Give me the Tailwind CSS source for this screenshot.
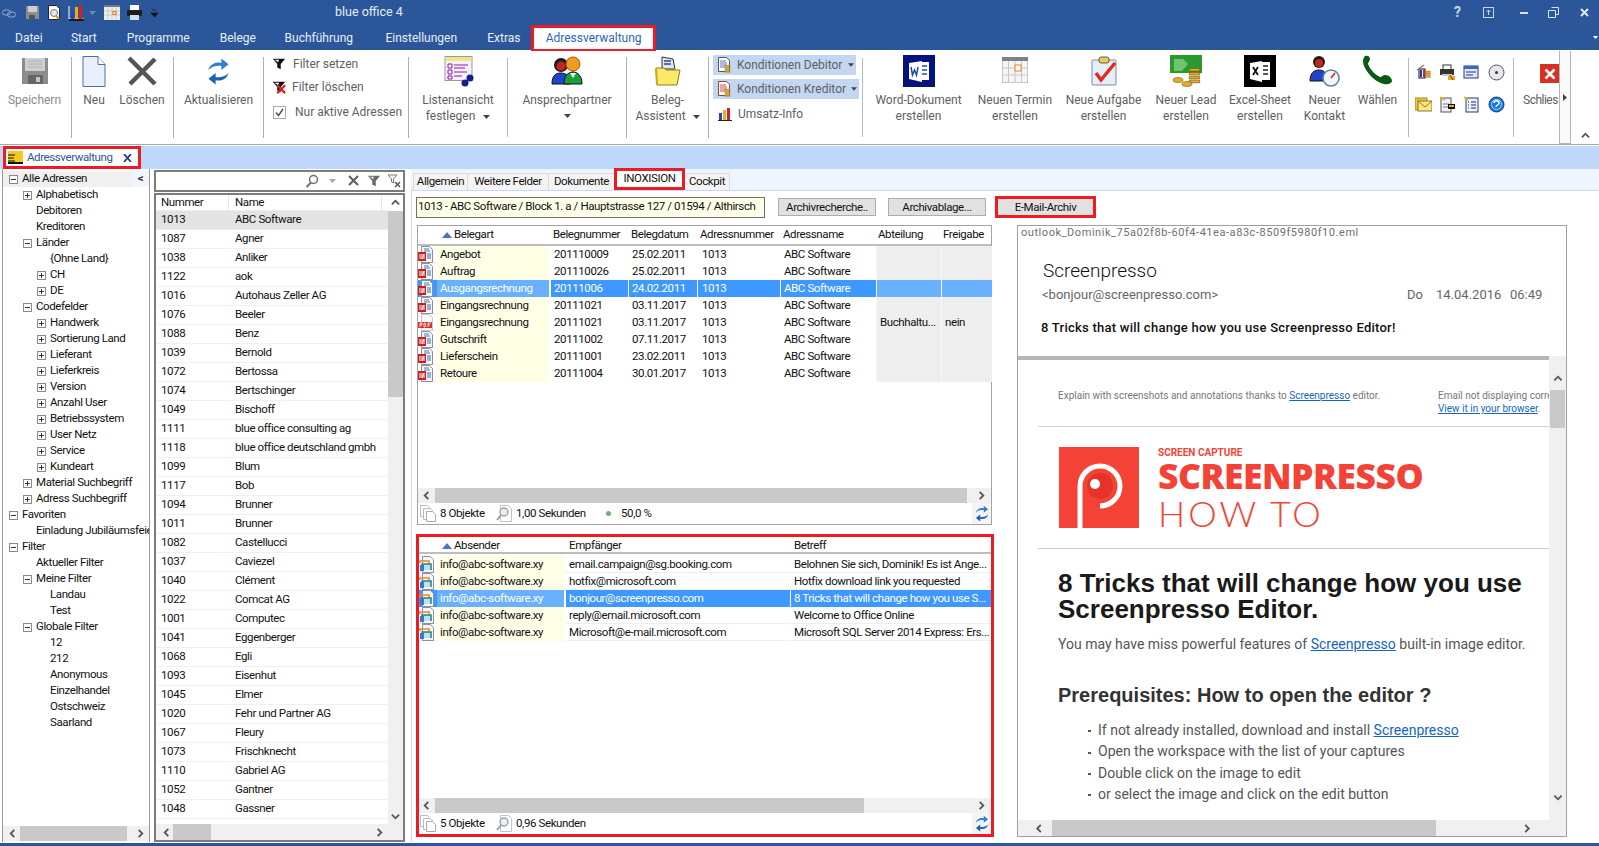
<!DOCTYPE html>
<html lang="de">
<head>
  <meta charset="UTF-8">
  <title>blue office 4</title>
  <script src="https://cdn.jsdelivr.net/npm/@tailwindcss/browser@4"></script>
</head>
<body class="h-[846px] w-[1599px] overflow-hidden bg-white font-['Roboto',sans-serif] text-[11.5px] tracking-[-0.4px] text-[#111]">
  <!-- shared icons -->
  <svg class="hidden">
    <symbol id="inox" viewBox="0 0 16 17"><path d="M3.5.5h8l3 3v13h-11z" fill="#f4f6fa" stroke="#8a8f98"/><path d="M6 3h5M6 5h6" stroke="#5577aa"/><rect x="0" y="6" width="8" height="9" fill="#c9201d"/><path d="M2 8v5M4 8v5l2-5v5" stroke="#fff" fill="none"/><path d="M9 8h4M9 10h4M9 12h4" stroke="#3d6fb4"/></symbol>
    <symbol id="pdf" viewBox="0 0 16 17"><path d="M3.5.5h8l3 3v13h-11z" fill="#f7f7f7" stroke="#c9c9c9"/><rect x="0" y="8" width="14" height="6" fill="#d5322e"/><path d="M2 13v-4h2v2H2M6 9v4h1l1-2-1-2zM10 13V9h3M10 11h2" stroke="#fff" stroke-width=".8" fill="none"/></symbol>
    <symbol id="mail" viewBox="0 0 16 17"><path d="M3.5.5h8l3 3v13h-11z" fill="#f4f6fa" stroke="#8a8f98"/><path d="M1 7V5h9v2" fill="none" stroke="#e88a25" stroke-width="1.6"/><path d="M3 14V8h9v6" fill="#bfe3ea" stroke="#23808f" stroke-width="1.5"/><path d="M1 9h4v6H1z" fill="#3c78c8"/></symbol>
    <symbol id="funnel" viewBox="0 0 16 16"><path d="M1 2h14L10 8v6l-4-2V8z" fill="#111"/><path d="M3 3h5L7 6z" fill="#fff"/></symbol>
    <symbol id="pages" viewBox="0 0 16 17"><path d="M.5.5h7l2 2v9H.5z" fill="#fff" stroke="#bbb"/><path d="M3.5 3.5h7l2 2v9h-9z" fill="#fff" stroke="#bbb"/><path d="M6.5 6.5h6l3 3v7h-9z" fill="#fff" stroke="#aaa"/></symbol>
    <symbol id="finder" viewBox="0 0 16 17"><path d="M4.5.5h8l3 3v13h-11z" fill="#fff" stroke="#c4c4c4"/><circle cx="8" cy="7" r="4" fill="#e6eef4" stroke="#93a5ae" stroke-width="1.4"/><path d="M5 10l-4 5" stroke="#a0a0a0" stroke-width="2"/></symbol>
    <symbol id="refresh" viewBox="0 0 16 18"><path d="M1 8c1-4 5-6 9-5V0l5 4-5 4V5C7 5 4 5 1 8z" fill="#2e7dd6"/><path d="M15 10c-1 4-5 6-9 5v3l-5-4 5-4v3c3 0 6 0 9-3z" fill="#1e62b8"/></symbol>
    <symbol id="chevL" viewBox="0 0 10 10"><path d="M7 1L3 5l4 4" fill="none" stroke="#555" stroke-width="2"/></symbol>
    <symbol id="chevR" viewBox="0 0 10 10"><path d="M3 1l4 4-4 4" fill="none" stroke="#555" stroke-width="2"/></symbol>
    <symbol id="chevU" viewBox="0 0 10 10"><path d="M1 7l4-4 4 4" fill="none" stroke="#555" stroke-width="2"/></symbol>
    <symbol id="chevD" viewBox="0 0 10 10"><path d="M1 3l4 4 4-4" fill="none" stroke="#555" stroke-width="2"/></symbol>
    <symbol id="sort" viewBox="0 0 10 6"><path d="M5 0l5 6H0z" fill="#4a72c8"/></symbol>
    <symbol id="coins" viewBox="0 0 10 14"><path d="M1 2h8v2H1zM1 5h8v2H1zM1 8h8v2H1zM1 11h8v2H1z" fill="#e2a92b" stroke="#7a5a10" stroke-width=".5"/></symbol>
    <symbol id="caret" viewBox="0 0 7 4"><path d="M0 0h7L3.5 4z" fill="#444"/></symbol>
  </svg>

  <!-- Titelleiste -->
  <div class="flex h-[25px] items-center bg-[#2b579a] text-white tracking-normal">
    <div class="flex w-[335px] items-center">
      <svg class="ml-[2px] h-[12px] w-[14px]" viewBox="0 0 14 12"><rect x=".5" y="3" width="8" height="5" rx="2.5" fill="none" stroke="#8fa6c8"/><rect x="5.5" y="5" width="8" height="5" rx="2.5" fill="none" stroke="#8fa6c8"/></svg>
      <svg class="ml-[9px] h-[15px] w-[15px]" viewBox="0 0 15 15"><path d="M1 1h13v13H1z" fill="#8d8d8d"/><path d="M3 1h9v6H3z" fill="#cfcfcf"/><path d="M4 10h6v4H4z" fill="#555"/></svg>
      <svg class="ml-[6px] h-[16px] w-[16px]" viewBox="0 0 16 16"><path d="M2.500 .5h8l3 3v11h-11z" fill="#fff" stroke="#222"/><circle cx="8" cy="8" r="3.500" fill="#dfe9f0" stroke="#777"/><path d="M10 11l3 3" stroke="#e09a20" stroke-width="2"/></svg>
      <svg class="ml-[6px] h-[18px] w-[17px]" viewBox="0 0 17 18"><path d="M1 2v13h15" fill="none" stroke="#fff"/><rect x="3" y="7" width="3" height="8" fill="#2446c4"/><rect x="7" y="3" width="3" height="12" fill="#e2b01c"/><rect x="11" y="1" width="3" height="14" fill="#d2211f"/><rect x="1" y="15" width="15" height="2" fill="#1b1b1b"/></svg>
      <svg class="ml-[4px] h-[4px] w-[7px]" viewBox="0 0 7 4"><path d="M0 0h7L3.500 4z" fill="#6d88b5"/></svg>
      <svg class="ml-[8px] h-[15px] w-[16px]" viewBox="0 0 16 15"><rect width="16" height="15" fill="#eee"/><rect width="16" height="2" fill="#777"/><path d="M4 2v13M8 2v13M12 2v13M0 6h16M0 10h16" stroke="#bbb" stroke-width=".7"/><rect x="9" y="6.500" width="3" height="3" fill="none" stroke="#e8761c"/></svg>
      <svg class="ml-[6px] h-[17px] w-[17px]" viewBox="0 0 17 17"><rect x="4" y="1" width="9" height="6" fill="#fff"/><rect x="1" y="6" width="15" height="6" rx="1" fill="#1e1e1e"/><rect x="4" y="11" width="9" height="5" fill="#cfe2f0"/></svg>
      <svg class="ml-[8px] h-[8px] w-[7px]" viewBox="0 0 7 8"><path d="M1 1h5M0 4h7L3.500 8z" fill="#111" stroke="#111" stroke-width=".6"/></svg>
    </div>
    <div class="w-[1119px] text-[12.500px] text-[#e6ecf5]">blue office 4</div>
    <div class="flex items-center">
      <span class="w-[28px] text-[14px] font-bold text-[#c9d6e8]">?</span>
      <svg class="ml-[1px] h-[11px] w-[11px]" viewBox="0 0 11 11"><rect x=".5" y=".5" width="10" height="10" fill="none" stroke="#c9d6e8"/><path d="M5.500 8V3M3.500 5l2-2 2 2" fill="none" stroke="#c9d6e8"/></svg>
      <span class="ml-[26px] h-[2px] w-[8px] bg-[#dbe4f1]"></span>
      <svg class="ml-[20px] h-[11px] w-[11px]" viewBox="0 0 11 11"><path d="M3.500.5h7v7h-3M.5 3.500h7v7h-7z" fill="none" stroke="#dbe4f1"/></svg>
      <svg class="ml-[21px] h-[9px] w-[9px]" viewBox="0 0 9 9"><path d="M1 1l7 7M8 1L1 8" stroke="#e5ebf4" stroke-width="1.800"/></svg>
    </div>
  </div>

  <!-- Menüband Tabs -->
  <div class="flex h-[25px] items-center bg-[#2b579a] text-[12px] tracking-normal text-[#e9eef6]">
    <span class="ml-[15px] w-[56px]">Datei</span>
    <span class="w-[56px]">Start</span>
    <span class="w-[93px]">Programme</span>
    <span class="w-[65px]">Belege</span>
    <span class="w-[101px]">Buchführung</span>
    <span class="w-[102px]">Einstellungen</span>
    <span class="w-[44px]">Extras</span>
    <span class="flex h-[26px] w-[125px] items-center justify-center border-[3px] border-b-[2px] border-[#ed1c24] bg-white text-[#2b66b8]">Adressverwaltung</span>
    <svg class="ml-[936px] h-[3px] w-[7px]" viewBox="0 0 7 4"><path d="M0 0h7L3.500 4z" fill="#fff"/></svg>
  </div>

  <!-- Menüband -->
  <div class="flex h-[94px] border-t border-white text-[12px] tracking-normal text-[#5f5f5f]">
    <div class="flex w-[69px] flex-col items-center pt-[6px]">
      <svg class="h-[28px] w-[28px]" viewBox="0 0 28 28"><path d="M1 1h26v26H1z" fill="#8c8c8c"/><path d="M4 1h20v13H4z" fill="#cfcfcf"/><path d="M7 4h14M7 7h14M7 10h14" stroke="#b1b1b1"/><path d="M7 18h15v9H7z" fill="#666"/><path d="M15 20h4v5h-4z" fill="#c6c6c6"/></svg>
      <span class="mt-[7px] leading-[16px] text-[#8a8a8a]">Speichern</span>
    </div>
    <span class="my-[6px] ml-[2px] w-px bg-[#aeb0b3]"></span>
    <div class="flex w-[44px] flex-col items-center pt-[5px]">
      <svg class="h-[31px] w-[24px]" viewBox="0 0 24 31"><path d="M1 .5h15l7 8v22H1z" fill="#e9f0fb" stroke="#4f6f9e"/><path d="M16 .5v8h7" fill="#fff" stroke="#4f6f9e"/></svg>
      <span class="mt-[5px] leading-[16px]">Neu</span>
    </div>
    <div class="flex w-[52px] flex-col items-center pt-[5px]">
      <svg class="h-[30px] w-[30px]" viewBox="0 0 30 30"><path d="M2 2l26 26M28 3L3 28" stroke="#555" stroke-width="4.500"/></svg>
      <span class="mt-[6px] leading-[16px]">Löschen</span>
    </div>
    <span class="my-[6px] ml-[5px] w-px bg-[#aeb0b3]"></span>
    <div class="flex w-[89px] flex-col items-center pt-[5px]">
      <svg class="h-[31px] w-[23px]" viewBox="0 0 16 18"><use href="#refresh"/></svg>
      <span class="mt-[5px] leading-[16px]">Aktualisieren</span>
    </div>
    <span class="my-[6px] w-px bg-[#aeb0b3]"></span>
    <div class="w-[144px]">
      <div class="mt-[5px] flex h-[16px] items-center pl-[8px]"><svg class="h-[14px] w-[14px]" viewBox="0 0 16 16"><use href="#funnel"/></svg><span class="ml-[7px]">Filter setzen</span></div>
      <div class="mt-[7px] flex h-[16px] items-center pl-[8px]"><svg class="h-[14px] w-[14px]" viewBox="0 0 16 16"><use href="#funnel"/><path d="M6 6l9 9M15 6l-9 9" stroke="#d8201d" stroke-width="2.500"/></svg><span class="ml-[6px]">Filter löschen</span></div>
      <div class="mt-[9px] flex h-[16px] items-center pl-[9px]"><svg class="h-[13px] w-[13px]" viewBox="0 0 13 13"><rect x=".5" y=".5" width="12" height="12" fill="#fff" stroke="#aaa"/><path d="M3 6.500l2.500 3L10 3" fill="none" stroke="#555" stroke-width="1.500"/></svg><span class="ml-[9px]">Nur aktive Adressen</span></div>
    </div>
    <span class="my-[6px] w-px bg-[#aeb0b3]"></span>
    <div class="flex w-[98px] flex-col items-center pt-[5px]">
      <svg class="h-[31px] w-[31px]" viewBox="0 0 31 31"><rect x="2" y=".5" width="27" height="24" fill="#f4f1fb" stroke="#999"/><rect x="2.500" y="1" width="26" height="4" fill="#f0e58a"/><path d="M5 8h4v4H5zM5 14h4v4H5zM5 20h4v3H5z" fill="none" stroke="#8a1c9c"/><path d="M11 9h14M11 12h11M11 16h13M11 20h8" stroke="#8a1c9c"/><circle cx="22" cy="27" r="3.500" fill="#12208a"/><circle cx="27" cy="22" r="3.500" fill="#12208a"/></svg>
      <span class="mt-[5px] text-center leading-[16px]">Listenansicht<br>festlegen <svg class="ml-[5px] inline h-[4px] w-[7px] align-middle"><use href="#caret"/></svg></span>
    </div>
    <span class="my-[7px] mb-[7px] w-px bg-[#a9bcd8]"></span>
    <div class="flex w-[118px] flex-col items-center pt-[5px]">
      <svg class="h-[31px] w-[32px]" viewBox="0 0 32 31"><circle cx="10" cy="9" r="7" fill="#1b1b1b"/><circle cx="10" cy="10" r="4.500" fill="#c9241c"/><path d="M1 28c0-9 4-11 9-11s9 3 9 11z" fill="#1f46c8" stroke="#111"/><circle cx="22" cy="8" r="7" fill="#f29a1f" stroke="#9d5a08"/><path d="M13 28c0-8 4-12 9-12s9 4 9 12z" fill="#1aa03a" stroke="#111"/><path d="M19 17l3 5 3-5z" fill="#fff"/></svg>
      <span class="mt-[5px] text-center leading-[16px]">Ansprechpartner</span>
      <svg class="mt-[6px] h-[4px] w-[7px]"><use href="#caret"/></svg>
    </div>
    <span class="my-[6px] w-px bg-[#aeb0b3]"></span>
    <div class="flex w-[81px] flex-col items-center pt-[5px]">
      <svg class="h-[31px] w-[28px]" viewBox="0 0 28 31"><path d="M8 1l11 2 2 10-13 0z" fill="#dfe6f2" stroke="#333"/><path d="M10 5h7M10 8h7" stroke="#334a88" stroke-width="1.500"/><path d="M2 12h8l2 2h14l-3 15H3z" fill="#fbe96a" stroke="#8b7b14"/><path d="M2 12l1 17" stroke="#c8a818" stroke-width="2"/></svg>
      <span class="mt-[5px] text-center leading-[16px]">Beleg-<br>Assistent <svg class="ml-[4px] inline h-[4px] w-[7px] align-middle"><use href="#caret"/></svg></span>
    </div>
    <span class="my-[6px] w-px bg-[#aeb0b3]"></span>
    <div class="w-[153px] pl-[4px]">
      <div class="mt-[4px] flex h-[20px] w-[143px] items-center whitespace-nowrap bg-[#c3d6f2] pl-[3px]">
        <svg class="h-[16px] w-[16px] shrink-0" viewBox="0 0 16 16"><path d="M2.500.5h8l3 3v11h-11z" fill="#fff" stroke="#555"/><path d="M4 4h6M4 6h7M4 8h7M4 10h5" stroke="#5a7bb0"/><use href="#coins" x="8" y="7" width="7" height="9"/></svg>
        <span class="ml-[5px]">Konditionen Debitor</span><svg class="ml-[6px] h-[4px] w-[6px] shrink-0"><use href="#caret"/></svg>
      </div>
      <div class="mt-[4px] flex h-[20px] w-[146px] items-center whitespace-nowrap bg-[#c3d6f2] pl-[3px]">
        <svg class="h-[16px] w-[16px] shrink-0" viewBox="0 0 16 16"><path d="M2.500.5h8l3 3v11h-11z" fill="#fff" stroke="#b0382d"/><path d="M4 4h6M4 6h7M4 8h7M4 10h5" stroke="#c9503f"/><use href="#coins" x="8" y="7" width="7" height="9"/></svg>
        <span class="ml-[5px]">Konditionen Kreditor</span><svg class="ml-[5px] h-[4px] w-[6px] shrink-0"><use href="#caret"/></svg>
      </div>
      <div class="mt-[7px] flex h-[16px] items-center pl-[5px]">
        <svg class="h-[14px] w-[14px]" viewBox="0 0 14 14"><rect x="1" y="6" width="3" height="7" fill="#2446c4"/><rect x="5" y="3" width="3" height="10" fill="#e2b01c"/><rect x="9" y="1" width="3" height="12" fill="#d2211f"/><path d="M0 13.500h14" stroke="#222"/></svg>
        <span class="ml-[6px]">Umsatz-Info</span>
      </div>
    </div>
    <span class="my-[7px] w-px bg-[#a9bcd8]"></span>
    <div class="flex w-[111px] flex-col items-center pt-[4px]">
      <svg class="h-[32px] w-[32px]" viewBox="0 0 32 32"><rect width="32" height="32" fill="#02137e"/><path d="M16 7h10v18H16z" fill="#fff"/><path d="M18 11h6M18 15h6M18 19h6" stroke="#1a4fa8" stroke-width="1.500"/><path d="M6 8l13-2v21L6 24z" fill="#fff"/><path d="M8 12l1.500 8 2-5 2 5 1.500-8" fill="none" stroke="#1a4fa8" stroke-width="1.500"/></svg>
      <span class="mt-[5px] text-center leading-[16px]">Word-Dokument<br>erstellen</span>
    </div>
    <div class="flex w-[82px] flex-col items-center pt-[6px]">
      <svg class="h-[26px] w-[26px]" viewBox="0 0 26 26"><rect width="26" height="26" fill="#f5f5f5" stroke="#999"/><rect width="26" height="4" fill="#808080"/><path d="M6.500 4v22M13 4v22M19.500 4v22M0 11h26M0 18h26" stroke="#c8c8c8"/><rect x="13" y="8" width="6" height="6" fill="#fff" stroke="#e8821c"/></svg>
      <span class="mt-[9px] text-center leading-[16px]">Neuen Termin<br>erstellen</span>
    </div>
    <div class="flex w-[95px] flex-col items-center pt-[5px]">
      <svg class="h-[30px] w-[26px]" viewBox="0 0 26 30"><rect x="1" y="4" width="24" height="25" rx="1" fill="#e6eefa" stroke="#7d8aa0"/><rect x="8" y="1" width="10" height="6" rx="2" fill="#e8c96a" stroke="#706020"/><path d="M5 17l5 7L24 7" fill="none" stroke="#e02a20" stroke-width="3.500"/></svg>
      <span class="mt-[6px] text-center leading-[16px]">Neue Aufgabe<br>erstellen</span>
    </div>
    <div class="flex w-[70px] flex-col items-center pt-[4px]">
      <svg class="h-[32px] w-[32px]" viewBox="0 0 32 32"><rect x="0" y="0" width="32" height="18" fill="#2a9a2e"/><path d="M4 4h9l5 5-6 7H4z" fill="#72c46e"/><use href="#coins" x="18" y="9" width="13" height="22"/><ellipse cx="8" cy="25" rx="5" ry="2.500" fill="#e2a92b" stroke="#7a5a10" stroke-width=".6"/><ellipse cx="17" cy="29" rx="5" ry="2.500" fill="#e2a92b" stroke="#7a5a10" stroke-width=".6"/></svg>
      <span class="mt-[5px] text-center leading-[16px]">Neuer Lead<br>erstellen</span>
    </div>
    <div class="flex w-[78px] flex-col items-center pt-[4px]">
      <svg class="h-[32px] w-[32px]" viewBox="0 0 32 32"><rect width="32" height="32" fill="#000"/><path d="M17 7h9v18h-9z" fill="#fff"/><path d="M19 11h5M19 15h5M19 19h5" stroke="#222" stroke-width="1.500"/><path d="M6 8l12-2v21L6 24z" fill="#fff"/><path d="M9 12l5 8M14 12l-5 8" stroke="#111" stroke-width="1.800"/></svg>
      <span class="mt-[5px] text-center leading-[16px]">Excel-Sheet<br>erstellen</span>
    </div>
    <div class="flex w-[51px] flex-col items-center pt-[4px]">
      <svg class="h-[32px] w-[32px]" viewBox="0 0 32 32"><circle cx="10" cy="7" r="6" fill="#1b1b1b"/><circle cx="10" cy="8" r="4" fill="#c9241c"/><path d="M1 26c0-8 4-11 9-11s8 3 8 11z" fill="#1f46c8" stroke="#111"/><circle cx="22" cy="23" r="8" fill="#f1f5fa" stroke="#5f7fa0" stroke-width="1.500"/><path d="M22 23l4-5" stroke="#d8201d" stroke-width="1.500"/></svg>
      <span class="mt-[5px] text-center leading-[16px]">Neuer<br>Kontakt</span>
    </div>
    <div class="flex w-[55px] flex-col items-center pt-[4px]">
      <svg class="h-[32px] w-[32px]" viewBox="0 0 32 32"><path d="M3 1c2-1 5 0 5 3 0 2-2 3-2 5 2 5 6 10 12 13 2 0 3-2 5-2 4 0 7 3 7 6 0 2-4 4-8 3C12 27 1 14 1 6c0-2 1-4 2-5z" fill="#0b5a12"/></svg>
      <span class="mt-[5px] leading-[16px]">Wählen</span>
    </div>
    <span class="ml-[3px] my-[7px] w-px bg-[#b3b9c4]"></span>
    <div class="grid h-full w-[104px] grid-cols-[24px_24px_25px_24px] grid-rows-[32px_32px] pl-[6px] pt-[13px]">
      <svg class="h-[17px] w-[17px]" viewBox="0 0 17 17"><rect x="4" y="5" width="6" height="9" fill="#fff" stroke="#111"/><path d="M5 6h2v7H5z" fill="#2030c8"/><path d="M8 6h2v7H8z" fill="#d2211f"/><path d="M2 6l7-5" stroke="#888" stroke-width="1.500"/><use href="#coins" x="10" y="5" width="6" height="10"/></svg>
      <svg class="h-[17px] w-[17px]" viewBox="0 0 17 17"><rect x="4" y="1" width="8" height="5" fill="#fff" stroke="#333"/><rect x="1" y="5" width="14" height="6" fill="#333"/><rect x="3" y="10" width="10" height="2" fill="#ccc"/><path d="M9 12h7v4H9z" fill="#e2a92b"/><path d="M11 11l3 5" stroke="#c02020"/></svg>
      <svg class="h-[16px] w-[16px]" viewBox="0 0 16 16"><rect x="1" y="2" width="14" height="12" fill="#dce8fa" stroke="#2a3a7a"/><rect x="1" y="2" width="14" height="3" fill="#3a66c8"/><path d="M3 8h10M3 11h7" stroke="#2a3a7a"/></svg>
      <svg class="h-[17px] w-[17px]" viewBox="0 0 17 17"><circle cx="8.500" cy="8.500" r="7.500" fill="#e8e8f2" stroke="#555"/><circle cx="8.500" cy="8.500" r="1.500" fill="#333"/></svg>
      <svg class="h-[17px] w-[17px]" viewBox="0 0 17 17"><rect x="0" y="2" width="12" height="12" fill="#e8c53a" stroke="#a88c1c"/><rect x="3" y="5" width="14" height="10" fill="#fbe78a" stroke="#8f7a1c"/><path d="M3 5l7 6 7-6" fill="none" stroke="#8f7a1c"/></svg>
      <svg class="h-[17px] w-[17px]" viewBox="0 0 17 17"><rect x="2" y="2" width="10" height="14" fill="#eef2fa" stroke="#555"/><path d="M1 1l5 3" stroke="#e2b01c" stroke-width="2"/><path d="M4 8h6M4 11h6" stroke="#778"/><path d="M9 8h7v5H9z" fill="#111"/><path d="M10 9h5v2h-5z" fill="#e2a92b"/></svg>
      <svg class="h-[17px] w-[17px]" viewBox="0 0 17 17"><rect x="3" y="2" width="12" height="14" fill="#eef2fa" stroke="#2a3a7a"/><path d="M1 1l4 3" stroke="#d8b820" stroke-width="2"/><path d="M5 6h1M8 6h5M5 9h1M8 9h5M5 12h1M8 12h5" stroke="#1a2a6a"/></svg>
      <svg class="h-[17px] w-[17px]" viewBox="0 0 17 17"><circle cx="8.500" cy="8.500" r="7.500" fill="#1978d8" stroke="#0d3f9a"/><circle cx="8.500" cy="8.500" r="5" fill="none" stroke="#a8d4f8"/><path d="M6 7c0-3 5-3 5 0 0 2-3 2-3 4" fill="none" stroke="#fff" stroke-width="1.500"/></svg>
    </div>
    <span class="my-[7px] w-px bg-[#b3b9c4]"></span>
    <div class="flex w-[45px] flex-col overflow-hidden pl-[9px] pt-[13px]">
      <div class="ml-[17px] flex h-[19px] w-[19px] shrink-0 items-center justify-center bg-[#d73124]"><svg class="h-[12px] w-[12px]" viewBox="0 0 12 12"><path d="M1.500 1.500l9 9M10.500 1.500l-9 9" stroke="#fff" stroke-width="2.500"/></svg></div>
      <span class="mt-[9px] whitespace-nowrap leading-[16px] tracking-[-0.5px]">Schlies</span>
    </div>
    <div class="flex w-[12px] items-center justify-center border-x border-b border-[#b5b5b5] bg-[#fafafa]"><svg class="h-[7px] w-[4px]" viewBox="0 0 4 7"><path d="M0 0l4 3.500L0 7z" fill="#444"/></svg></div>
    <div class="flex w-[28px] items-end justify-center pb-[4px]"><svg class="h-[9px] w-[9px]"><use href="#chevU"/></svg></div>
  </div>
  <div class="h-px bg-[#a8a8a8]"></div>

  <!-- Dokument-Tabs -->
  <div class="h-[23px] bg-[#bfd9fc]">
    <div class="mt-[1px] flex h-[23px] w-[138px] translate-x-[3px] items-center border-[3px] border-[#ed1c24] bg-white pl-[2px] text-[#2b579a]">
      <svg class="h-[13px] w-[15px] shrink-0" viewBox="0 0 15 13"><rect width="15" height="13" fill="#f3c91d"/><path d="M0 4h7M0 7h6M0 10h7" stroke="#111"/><path d="M0 11h15v2H0z" fill="#111"/></svg>
      <span class="ml-[4px] text-[11.500px]">Adressverwaltung</span>
      <svg class="ml-[10px] h-[8px] w-[9px]" viewBox="0 0 9 8"><path d="M1 0l7 8M8 0L1 8" stroke="#1f3f82" stroke-width="1.800"/></svg>
    </div>
  </div>

  <!-- Hauptbereich -->
  <div class="flex h-[674px] bg-white">
    <!-- Baum -->
    <div class="ml-[2px] flex h-[673px] w-[148px] flex-col border-x border-[#9a9a9a]">
      <div id="tree" class="flex-1 overflow-hidden pt-[2px]"></div>
      <div class="mb-[1px] flex h-[15px] items-center bg-[#f0f0f0]">
        <svg class="ml-[5px] h-[9px] w-[9px]"><use href="#chevL"/></svg>
        <span class="ml-[3px] h-full w-[107px] bg-[#c9c9c9]"></span>
        <svg class="ml-[9px] h-[9px] w-[9px]"><use href="#chevR"/></svg>
      </div>
    </div>
    <!-- Liste -->
    <div class="ml-[4px] flex h-[673px] w-[251px] flex-col pt-px">
      <div class="flex h-[22px] items-center border-2 border-[#7c7c7c]">
        <svg class="ml-[149px] h-[14px] w-[14px]" viewBox="0 0 14 14"><circle cx="8.500" cy="5.500" r="4" fill="none" stroke="#6d6d6d" stroke-width="1.500"/><path d="M6 8.500L1.500 13" stroke="#6d6d6d" stroke-width="2"/></svg>
        <svg class="ml-[10px] h-[4px] w-[7px]" viewBox="0 0 7 4"><path d="M0 0h7L3.500 4z" fill="#a8a8a8"/></svg>
        <svg class="ml-[12px] h-[11px] w-[11px]" viewBox="0 0 11 11"><path d="M1 1l9 9M10 1l-9 9" stroke="#5f5f5f" stroke-width="2"/></svg>
        <svg class="ml-[8px] h-[14px] w-[14px]" viewBox="0 0 16 16"><path d="M1 2h14L10 8v6l-4-2V8z" fill="#6a6a6a"/><path d="M3 3h5L7 6z" fill="#ddd"/></svg>
        <svg class="ml-[6px] h-[14px] w-[14px]" viewBox="0 0 14 14"><path d="M1 1h9L6.500 5v4L4.500 8V5z" fill="none" stroke="#777"/><path d="M8 8l5 5M13 8l-5 5" stroke="#555" stroke-width="1.500"/></svg>
      </div>
      <div class="mt-px flex h-[650px] flex-col border-2 border-[#7c7c7c]">
        <div class="flex flex-1 overflow-hidden">
          <div class="w-[232px]">
            <div class="flex h-[16px] items-center border-b border-[#eee]"><span class="w-[73px] border-r border-[#e6e6e6] pl-[5px]">Nummer</span><span class="w-[153px] border-r border-[#e6e6e6] pl-[6px]">Name</span></div>
            <div id="addresses"></div>
          </div>
          <div class="flex w-[15px] flex-col items-center bg-[#f0f0f0]">
            <span class="flex h-[16px] items-center bg-white px-[3px]"><svg class="h-[9px] w-[9px]"><use href="#chevU"/></svg></span>
            <span class="h-[186px] w-full bg-[#c9c9c9]"></span>
            <span class="flex flex-1 items-end pb-[3px]"><svg class="h-[9px] w-[9px]"><use href="#chevD"/></svg></span>
          </div>
        </div>
        <div class="flex h-[16px] items-center bg-[#f0f0f0]">
          <svg class="ml-[6px] h-[9px] w-[9px]"><use href="#chevL"/></svg>
          <span class="ml-[2px] h-full w-[38px] bg-[#c9c9c9]"></span>
          <svg class="ml-[164px] h-[9px] w-[9px]"><use href="#chevR"/></svg>
        </div>
      </div>
    </div>
    <!-- Rechter Bereich -->
    <div class="ml-[6px] flex h-[673px] w-[1188px] flex-col">
      <div class="flex h-[21px] items-end bg-[#eef5fd] pl-[2px]">
        <span class="flex h-[17px] w-[55px] items-center justify-center border border-b-0 border-[#dcdcdc] bg-[#f4f4f4]">Allgemein</span>
        <span class="flex h-[17px] w-[81px] items-center justify-center border-y border-r border-b-0 border-[#dcdcdc] bg-[#f4f4f4]">Weitere Felder</span>
        <span class="flex h-[17px] w-[65px] items-center justify-center border-t border-[#dcdcdc] bg-[#f4f4f4]">Dokumente</span>
        <span class="z-10 flex h-[22px] w-[71px] items-center justify-center border-[3px] border-[#ed1c24] bg-white">INOXISION</span>
        <span class="flex h-[17px] w-[45px] items-center justify-center border-y border-r border-b-0 border-[#dcdcdc] bg-[#f4f4f4]">Cockpit</span>
      </div>
      <div class="flex flex-1 flex-col border-t border-l border-[#c7daf3] pl-[4px]">
        <div class="mt-[5px] flex items-center">
          <div class="flex h-[21px] w-[349px] items-center overflow-hidden whitespace-nowrap border border-[#6f6f6f] bg-[#ffffe8] pl-px">1013 - ABC Software / Block 1. a / Hauptstrasse 127 / 01594 / Althirsch</div>
          <button class="ml-[13px] h-[18px] w-[98px] border border-[#adadad] bg-[#e1e1e1]">Archivrecherche..</button>
          <button class="ml-[12px] h-[18px] w-[98px] border border-[#adadad] bg-[#e1e1e1]">Archivablage...</button>
          <button class="ml-[9px] h-[22px] w-[101px] border-[3px] border-[#ed1c24] bg-[#e1e1e1]">E-Mail-Archiv</button>
        </div>
        <div class="flex">
          <div class="w-[578px]">
            <!-- Belege -->
            <div class="ml-[1px] mt-[7px] flex h-[300px] w-[575px] flex-col border border-[#a3a3a3]">
              <div class="grid h-[20px] grid-cols-[19px_114px_78px_69px_83px_95px_65px_51px] items-center border-b-2 border-[#bdbdbd]">
                <span></span>
                <span class="flex items-center pl-[5px]"><svg class="h-[6px] w-[10px]"><use href="#sort"/></svg><span class="ml-[2px]">Belegart</span></span>
                <span class="pl-[2px]">Belegnummer</span><span class="pl-[2px]">Belegdatum</span><span class="pl-[2px]">Adressnummer</span><span class="pl-[2px]">Adressname</span><span class="pl-[2px]">Abteilung</span><span class="pl-[2px]">Freigabe</span>
              </div>
              <div id="docs" class="flex-1"></div>
              <div class="flex h-[15px] items-center bg-[#f0f0f0]">
                <svg class="ml-[4px] h-[9px] w-[9px]"><use href="#chevL"/></svg>
                <span class="ml-[4px] h-full w-[532px] bg-[#c9c9c9]"></span>
                <svg class="ml-[10px] h-[9px] w-[9px]"><use href="#chevR"/></svg>
              </div>
              <div class="flex h-[21px] items-center">
                <svg class="ml-[2px] h-[17px] w-[16px]"><use href="#pages"/></svg><span class="ml-[4px] w-[56px]">8 Objekte</span>
                <svg class="h-[17px] w-[16px]"><use href="#finder"/></svg><span class="ml-[4px] w-[90px]">1,00 Sekunden</span>
                <span class="h-[5px] w-[5px] rounded-full bg-[#6db36d]"></span><span class="ml-[10px]">50,0 %</span>
                <span class="ml-auto flex h-full w-[19px] items-center justify-center bg-[#f4f4f4]"><svg class="h-[17px] w-[14px]"><use href="#refresh"/></svg></span>
              </div>
            </div>
            <!-- Mails -->
            <div class="mt-[9px] flex h-[303px] w-[578px] flex-col border-[3px] border-[#ed1c24]">
              <div class="grid h-[17px] grid-cols-[18px_129px_225px_200px] items-center border-b-2 border-[#bdbdbd]">
                <span></span>
                <span class="flex items-center pl-[5px]"><svg class="h-[6px] w-[10px]"><use href="#sort"/></svg><span class="ml-[2px]">Absender</span></span>
                <span class="pl-[3px]">Empfänger</span><span class="pl-[3px]">Betreff</span>
              </div>
              <div id="mails" class="flex-1 pt-[2px]"></div>
              <div class="flex h-[15px] items-center bg-[#f0f0f0]">
                <svg class="ml-[3px] h-[9px] w-[9px]"><use href="#chevL"/></svg>
                <span class="ml-[4px] h-full w-[429px] bg-[#c9c9c9]"></span>
                <svg class="ml-[113px] h-[9px] w-[9px]"><use href="#chevR"/></svg>
              </div>
              <div class="flex h-[21px] items-center">
                <svg class="ml-px h-[17px] w-[16px]"><use href="#pages"/></svg><span class="ml-[4px] w-[56px]">5 Objekte</span>
                <svg class="h-[17px] w-[16px]"><use href="#finder"/></svg><span class="ml-[4px]">0,96 Sekunden</span>
                <span class="ml-auto flex h-full w-[19px] items-center justify-center bg-[#f4f4f4]"><svg class="h-[17px] w-[14px]"><use href="#refresh"/></svg></span>
              </div>
            </div>
          </div>
          <!-- Mail-Vorschau -->
          <div class="ml-[23px] mt-[7px] flex h-[612px] w-[550px] flex-col border border-[#a0a0a0] tracking-normal">
            <div class="h-[130px] shrink-0">
              <div class="h-[15px] pl-[3px] text-[11px] leading-[14px] tracking-[0.55px] text-[#707070]">outlook_Dominik_75a02f8b-60f4-41ea-a83c-8509f5980f10.eml</div>
              <div class="ml-[25px] mt-[15px] text-[19px] font-light leading-[30px] text-[#111]">Screenpresso</div>
              <div class="ml-[24px] flex h-[18px] items-center text-[13px] text-[#666]"><span class="w-[365px]">&lt;bonjour@screenpresso.com&gt;</span><span class="w-[29px]">Do</span><span class="w-[74px]">14.04.2016</span><span>06:49</span></div>
              <div class="ml-[23px] mt-[15px] h-[18px] text-[13px] font-medium leading-[18px] tracking-[0.25px] text-[#111]">8 Tricks that will change how you use Screenpresso Editor!</div>
            </div>
            <div class="flex min-h-0 flex-1">
              <div class="w-[531px] overflow-hidden">
                <div class="h-[4px] bg-[#b7b7b7]"></div>
                <div class="ml-[40px] mt-[29px] flex text-[10px] leading-[13px] text-[#777]">
                  <div class="w-[380px] shrink-0">Explain with screenshots and annotations thanks to <a class="text-[#1565c0] underline">Screenpresso</a> editor.</div>
                  <div class="whitespace-nowrap">Email not displaying corre<br><a class="text-[#1565c0] underline">View it in your browser</a>.</div>
                </div>
                <div class="ml-[20px] mt-[11px] border-t border-[#cfcfcf]"></div>
                <div class="ml-[41px] mt-[20px] flex">
                  <svg class="h-[81px] w-[80px] shrink-0" viewBox="0 0 80 81"><rect width="80" height="81" fill="#f44336"/><path d="M21 81V39a20 20 0 1 1 20 20" fill="none" stroke="#fff" stroke-width="5"/><circle cx="41" cy="39" r="13" fill="#e53329"/><circle cx="36" cy="37" r="5" fill="#fff"/></svg>
                  <div class="ml-[19px] text-[#f44336]">
                    <div class="h-[14px] text-[10px] font-bold leading-[11px]">SCREEN CAPTURE</div>
                    <div class="h-[29px] font-['Open_Sans',sans-serif] text-[35.500px] font-extrabold leading-[29px] tracking-[-0.5px]">SCREENPRESSO</div>
                    <div class="mt-[8px] font-['Lato',sans-serif] text-[36px] font-light leading-[30px] tracking-[3px]">HOW TO</div>
                  </div>
                </div>
                <div class="ml-[20px] mt-[20px] border-t border-[#cfcfcf]"></div>
                <div class="ml-[40px] mt-[21px] font-['Liberation_Sans',sans-serif] text-[26px] font-bold leading-[26px] text-[#1a1a1a]">8 Tricks that will change how you use<br>Screenpresso Editor.</div>
                <div class="ml-[40px] mt-[12px] whitespace-nowrap text-[14px] leading-[20px] text-[#555]">You may have miss powerful features of <a class="text-[#1565c0] underline">Screenpresso</a> built-in image editor.</div>
                <div class="ml-[40px] mt-[28px] font-['Liberation_Sans',sans-serif] text-[20px] font-bold leading-[26px] text-[#333]">Prerequisites: How to open the editor ?</div>
                <ul class="ml-[70px] mt-[12px] list-none text-[14px] text-[#555]">
                  <li class="h-[21.3px] leading-[21px]"><span class="mr-[7px] inline-block h-[2px] w-[3px] bg-[#555] align-middle"></span>If not already installed, download and install <a class="text-[#1565c0] underline">Screenpresso</a></li>
                  <li class="h-[21.3px] leading-[21px]"><span class="mr-[7px] inline-block h-[2px] w-[3px] bg-[#555] align-middle"></span>Open the workspace with the list of your captures</li>
                  <li class="h-[21.3px] leading-[21px]"><span class="mr-[7px] inline-block h-[2px] w-[3px] bg-[#555] align-middle"></span>Double click on the image to edit</li>
                  <li class="h-[21.3px] leading-[21px]"><span class="mr-[7px] inline-block h-[2px] w-[3px] bg-[#555] align-middle"></span>or select the image and click on the edit button</li>
                </ul>
              </div>
              <div class="flex w-[17px] flex-col items-center bg-[#f0f0f0]">
                <span class="mt-[18px] h-[9px]"><svg class="h-[9px] w-[10px]"><use href="#chevU"/></svg></span>
                <span class="mt-[7px] h-[38px] w-[15px] bg-[#c9c9c9]"></span>
                <span class="flex flex-1 items-end pb-[18px]"><svg class="h-[9px] w-[10px]"><use href="#chevD"/></svg></span>
              </div>
            </div>
            <div class="flex h-[16px] shrink-0 items-center bg-[#f0f0f0]">
              <svg class="ml-[16px] h-[9px] w-[10px]"><use href="#chevL"/></svg>
              <span class="ml-[8px] h-full w-[384px] bg-[#c9c9c9]"></span>
              <svg class="ml-[86px] h-[9px] w-[10px]"><use href="#chevR"/></svg>
            </div>
          </div>
        </div>
      </div>
    </div>
  </div>
  <div class="h-[4px] bg-[#2b579a]"></div>

  <script>
    // Baum: [Ebene, Symbol, Text]
    const treeItems = [
      [0,'-','Alle Adressen'],[1,'+','Alphabetisch'],[1,'','Debitoren'],[1,'','Kreditoren'],[1,'-','Länder'],
      [2,'','{Ohne Land}'],[2,'+','CH'],[2,'+','DE'],[1,'-','Codefelder'],[2,'+','Handwerk'],[2,'+','Sortierung Land'],
      [2,'+','Lieferant'],[2,'+','Lieferkreis'],[2,'+','Version'],[2,'+','Anzahl User'],[2,'+','Betriebssystem'],
      [2,'+','User Netz'],[2,'+','Service'],[2,'+','Kundeart'],[1,'+','Material Suchbegriff'],[1,'+','Adress Suchbegriff'],
      [0,'-','Favoriten'],[1,'','Einladung Jubiläumsfeie'],[0,'-','Filter'],[1,'','Aktueller Filter'],[1,'-','Meine Filter'],
      [2,'','Landau'],[2,'','Test'],[1,'-','Globale Filter'],[2,'','12'],[2,'','212'],[2,'','Anonymous'],
      [2,'','Einzelhandel'],[2,'','Ostschweiz'],[2,'','Saarland']
    ];
    const iconIndent = ['pl-[6px]', 'pl-[20px]', 'pl-[34px]'];
    const textIndent = ['pl-[19px]', 'pl-[33px]', 'pl-[47px]'];
    document.getElementById('tree').innerHTML = treeItems.map(([level, sign, text], i) => {
      const box = sign ? `<svg class="mr-[4px] h-[9px] w-[9px] shrink-0" viewBox="0 0 9 9"><rect x=".5" y=".5" width="8" height="8" fill="#fff" stroke="#8a8a8a"/><path d="M2 4.500h5${sign === '+' ? 'M4.500 2v5' : ''}" stroke="#333"/></svg>` : '';
      const row = `<div class="flex h-[16px] flex-1 items-center whitespace-nowrap ${sign ? iconIndent[level] : textIndent[level]}">${box}${text}</div>`;
      if (i === 0) {
        return `<div class="flex h-[16px] items-center bg-[#f0f0f0]">${row}<span class="flex h-full w-[17px] shrink-0 items-center justify-center bg-[#eef5fd] font-bold text-[#333]">&lt;</span></div>`;
      }
      return `<div class="flex">${row}</div>`;
    }).join('');

    const addresses = [
      ['1013','ABC Software'],['1087','Agner'],['1038','Anliker'],['1122','aok'],['1016','Autohaus Zeller AG'],['1076','Beeler'],
      ['1088','Benz'],['1039','Bernold'],['1072','Bertossa'],['1074','Bertschinger'],['1049','Bischoff'],['1111','blue office consulting ag'],
      ['1118','blue office deutschland gmbh'],['1099','Blum'],['1117','Bob'],['1094','Brunner'],['1011','Brunner'],['1082','Castellucci'],
      ['1037','Caviezel'],['1040','Clément'],['1022','Comcat AG'],['1001','Computec'],['1041','Eggenberger'],['1068','Egli'],['1093','Eisenhut'],
      ['1045','Elmer'],['1020','Fehr und Partner AG'],['1067','Fleury'],['1073','Frischknecht'],['1110','Gabriel AG'],['1052','Gantner'],['1048','Gassner']
    ];
    document.getElementById('addresses').innerHTML = addresses.map(([nr, name], i) =>
      `<div class="flex h-[19px] items-center border-b border-[#f0f0f0] ${i === 0 ? 'bg-[#e3e3e3]' : ''}"><span class="w-[79px] pl-[5px]">${nr}</span><span class="whitespace-nowrap">${name}</span></div>`
    ).join('');

    const docs = [
      ['inox','Angebot','201110009','25.02.2011'],['inox','Auftrag','201110026','25.02.2011'],['inox','Ausgangsrechnung','20111006','24.02.2011'],
      ['inox','Eingangsrechnung','20111021','03.11.2017'],['pdf','Eingangsrechnung','20111021','03.11.2017','Buchhaltu...','nein'],
      ['inox','Gutschrift','20111002','07.11.2017'],['inox','Lieferschein','20111001','23.02.2011'],['inox','Retoure','20111004','30.01.2017']
    ];
    document.getElementById('docs').innerHTML = docs.map(([icon, art, nr, date, dept, share], i) => {
      const sel = i === 2;
      const cell = sel ? 'bg-[#3d98ff] text-white' : 'bg-white';
      const light = sel ? 'bg-[#69b1ff] text-white' : 'bg-[#ffffe6]';
      const grey = sel ? 'bg-[#69b1ff] text-white' : 'bg-[#eeeeee]';
      return `<div class="grid h-[17px] grid-cols-[19px_114px_78px_69px_83px_95px_65px_51px] items-stretch border-b border-[#eee]">
        <span class="${sel ? 'bg-[#3d98ff]' : ''}"><svg class="h-[17px] w-[16px]"><use href="#${icon}"/></svg></span>
        <span class="flex items-center border-r-2 border-white pl-[3px] ${light}">${art}</span>
        <span class="flex items-center border-r border-white pl-[3px] ${cell}">${nr}</span>
        <span class="flex items-center border-r border-white pl-[3px] ${cell}">${date}</span>
        <span class="flex items-center border-r border-white pl-[4px] ${cell}">1013</span>
        <span class="flex items-center pl-[3px] ${cell}">ABC Software</span>
        <span class="flex items-center border-l border-[#f8f8f8] pl-[3px] ${grey}">${dept || ''}</span>
        <span class="flex items-center border-l border-[#f8f8f8] pl-[3px] ${grey}">${share || ''}</span>
      </div>`;
    }).join('');

    const mails = [
      ['email.campaign@sg.booking.com','Belohnen Sie sich, Dominik! Es ist Ange...'],['hotfix@microsoft.com','Hotfix download link you requested'],
      ['bonjour@screenpresso.com','8 Tricks that will change how you use S...'],['reply@email.microsoft.com','Welcome to Office Online'],
      ['Microsoft@e-mail.microsoft.com','Microsoft SQL Server 2014 Express: Ers...']
    ];
    document.getElementById('mails').innerHTML = mails.map(([to, subject], i) => {
      const sel = i === 2;
      return `<div class="grid h-[17px] grid-cols-[18px_129px_225px_200px] items-stretch border-b border-[#eee]">
        <span class="${sel ? 'bg-[#3d98ff]' : ''}"><svg class="h-[17px] w-[16px]"><use href="#mail"/></svg></span>
        <span class="flex items-center border-r-2 border-white pl-[3px] ${sel ? 'bg-[#69b1ff] text-white' : 'bg-[#ffffe6]'}">info@abc-software.xy</span>
        <span class="flex items-center border-r border-white pl-[3px] ${sel ? 'bg-[#3d98ff] text-white' : ''}">${to}</span>
        <span class="flex items-center overflow-hidden whitespace-nowrap pl-[3px] ${sel ? 'bg-[#3d98ff] text-white' : ''}">${subject}</span>
      </div>`;
    }).join('');
  </script>
</body>
</html>
